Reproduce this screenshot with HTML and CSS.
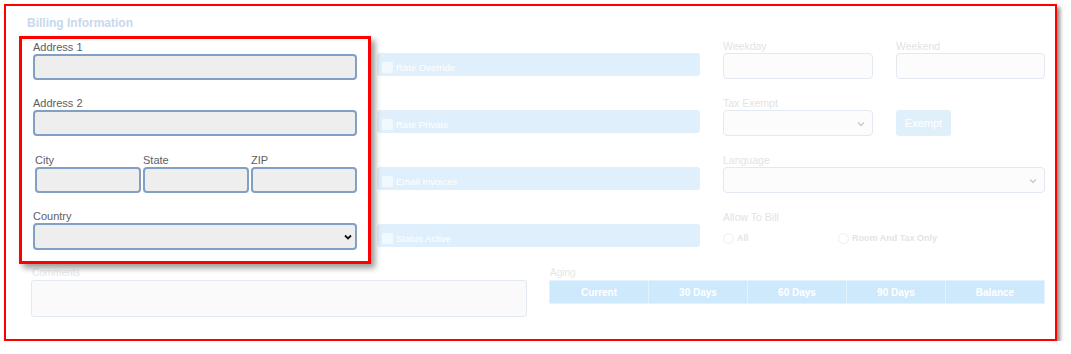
FILE: index.html
```html
<!DOCTYPE html>
<html>
<head>
    <title>Billing Information</title>
    <link rel="stylesheet" href="styles.css">
</head>
<body>
    <div class="panel">
        <h2 class="panel-title">Billing Information</h2>
        <div class="form-grid">
            <div class="address-box">
                <div class="field">
                    <label>Address 1</label>
                    <input type="text" class="addr-input">
                </div>
                <div class="field field-wide">
                    <label>Address 2</label>
                    <input type="text" class="addr-input">
                </div>
                <div class="field city-row">
                    <div>
                        <label>City</label>
                        <input type="text" class="addr-input">
                    </div>
                    <div>
                        <label>State</label>
                        <input type="text" class="addr-input">
                    </div>
                    <div>
                        <label>ZIP</label>
                        <input type="text" class="addr-input">
                    </div>
                </div>
                <div class="field">
                    <label>Country</label>
                    <div class="select-wrap">
                        <select class="addr-input addr-select"></select>
                        <svg class="chevron dark" width="8" height="6" viewBox="0 0 8 6"><path d="M1 1.5 L4 4.5 L7 1.5" fill="none" stroke="#111" stroke-width="1.8"/></svg>
                    </div>
                </div>
            </div>

            <div class="col-flags">
                <div class="flag-row"><div class="flag-bar"><span class="check"></span>Rate Override</div></div>
                <div class="flag-row"><div class="flag-bar"><span class="check"></span>Rate Private</div></div>
                <div class="flag-row"><div class="flag-bar"><span class="check"></span>Email Invoices</div></div>
                <div class="flag-row"><div class="flag-bar"><span class="check"></span>Status Active</div></div>
            </div>

            <div class="col-rates">
                <div class="rate-row">
                    <div class="rate-field w150">
                        <label>Weekday</label>
                        <input type="text" class="faded-input">
                    </div>
                    <div class="rate-field w149">
                        <label>Weekend</label>
                        <input type="text" class="faded-input">
                    </div>
                </div>
                <div class="rate-row">
                    <div class="rate-field w150">
                        <label>Tax Exempt</label>
                        <div class="select-wrap">
                            <select class="faded-input"></select>
                            <svg class="chevron" width="8" height="6" viewBox="0 0 8 6"><path d="M1 1.5 L4 4.5 L7 1.5" fill="none" stroke="#c8c8c8" stroke-width="1.3"/></svg>
                        </div>
                    </div>
                    <div class="rate-field">
                        <label>&nbsp;</label>
                        <button class="exempt-btn">Exempt</button>
                    </div>
                </div>
                <div class="rate-row">
                    <div class="rate-field full">
                        <label>Language</label>
                        <div class="select-wrap">
                            <select class="faded-input"></select>
                            <svg class="chevron" width="8" height="6" viewBox="0 0 8 6"><path d="M1 1.5 L4 4.5 L7 1.5" fill="none" stroke="#c8c8c8" stroke-width="1.3"/></svg>
                        </div>
                    </div>
                </div>
                <div class="rate-row">
                    <div class="rate-field full">
                        <label>Allow To Bill</label>
                        <div class="radio-line">
                            <span class="radio-opt opt-all"><span class="radio"></span>All</span>
                            <span class="radio-opt"><span class="radio"></span>Room And Tax Only</span>
                        </div>
                    </div>
                </div>
            </div>
        </div>

        <div class="bottom-row">
            <div class="comments">
                <label>Comments</label>
                <textarea></textarea>
            </div>
            <div class="aging">
                <label>Aging</label>
                <table class="aging-table">
                    <tr>
                        <th>Current</th>
                        <th>30 Days</th>
                        <th>60 Days</th>
                        <th>90 Days</th>
                        <th>Balance</th>
                    </tr>
                </table>
            </div>
        </div>
    </div>
</body>
</html>
```

FILE: styles.css
```css
body {
    font-family: "Liberation Sans", Arial, sans-serif;
    background-color: #fff;
    margin: 0;
    padding: 0;
}
.panel {
    box-sizing: border-box;
    width: 1053px;
    height: 337px;
    margin: 4px 0 0 4px;
    border: 2px solid #ff0000;
    box-shadow: 3px 3px 4px rgba(0, 0, 0, 0.45);
    padding: 7px 10px 0 13px;
    background-color: #fff;
}
.panel-title {
    margin: 0 0 3px 8px;
    font-size: 12px;
    line-height: 20px;
    font-weight: bold;
    color: #c8d8eb;
}
.form-grid {
    display: flex;
    align-items: flex-start;
}
.address-box {
    box-sizing: border-box;
    width: 352px;
    border: 3px solid #ff0000;
    box-shadow: 4px 4px 6px rgba(0, 0, 0, 0.4);
    padding: 1px 11px 11px 11px;
    background-color: #fff;
    position: relative;
    z-index: 1;
}
.address-box label {
    display: block;
    font-size: 11px;
    line-height: 14px;
    color: #5e5e5e;
}
.field {
    margin-bottom: 16px;
}
.field-wide {
    margin-bottom: 17px;
}
.field:last-child {
    margin-bottom: 0;
}
.addr-input {
    display: block;
    box-sizing: border-box;
    width: 100%;
    height: 26px;
    margin: 0;
    background-color: #eeeeee;
    border: 2px solid #829fc4;
    border-radius: 4px;
    font-family: inherit;
}
.addr-select {
    height: 27px;
    appearance: none;
    -webkit-appearance: none;
}
.city-row {
    display: grid;
    grid-template-columns: 1fr 1fr 1fr;
    column-gap: 2px;
    margin-left: 2px;
}
.select-wrap {
    position: relative;
}
.chevron {
    position: absolute;
    right: 8px;
    top: 11px;
}
.chevron.dark {
    right: 5px;
}
.col-flags {
    width: 323px;
    margin-left: 6px;
}
.flag-row {
    height: 43px;
    padding-top: 17px;
    box-sizing: border-box;
    margin-bottom: 14px;
}
.flag-bar {
    box-sizing: border-box;
    height: 23px;
    background-color: #dfeffb;
    border-radius: 3px;
    display: flex;
    align-items: center;
    padding: 6px 0 0 5px;
    font-size: 9.5px;
    color: #fff;
}
.check {
    width: 11px;
    height: 11px;
    background-color: #f1f8fe;
    border-radius: 1px;
    margin-right: 3px;
}
.col-rates {
    width: 322px;
    margin-left: 23px;
}
.rate-row {
    display: flex;
    height: 43px;
    margin-bottom: 14px;
}
.rate-field label {
    display: block;
    height: 17px;
    box-sizing: border-box;
    padding-top: 3px;
    font-size: 10.5px;
    line-height: 14px;
    color: #e3e3e3;
}
.rate-field.w150 {
    width: 150px;
    margin-right: 23px;
}
.rate-field.w149 {
    width: 149px;
}
.rate-field.full {
    width: 322px;
}
.faded-input {
    display: block;
    box-sizing: border-box;
    width: 100%;
    height: 26px;
    margin: 0;
    background-color: #fcfcfc;
    border: 1px solid #e2e9f2;
    border-radius: 4px;
    appearance: none;
    -webkit-appearance: none;
}
.exempt-btn {
    width: 55px;
    height: 26px;
    border: none;
    border-radius: 3px;
    background-color: #e0f0fb;
    color: #fff;
    font-family: inherit;
    font-size: 11px;
    padding: 0;
}
.radio-line {
    display: flex;
    align-items: center;
    height: 26px;
    padding-top: 2px;
    box-sizing: border-box;
    font-size: 9px;
    font-weight: bold;
    color: #e4e4e4;
}
.radio-opt {
    display: flex;
    align-items: center;
}
.opt-all {
    width: 115px;
}
.radio {
    width: 9px;
    height: 9px;
    border: 1px solid #eeeeee;
    border-radius: 50%;
    margin-right: 3px;
}
.bottom-row {
    display: flex;
    margin: 2px 0 0 12px;
}
.bottom-row label {
    display: block;
    font-size: 10px;
    line-height: 14px;
    color: #e6e6e6;
}
.comments {
    width: 496px;
}
.comments label {
    padding-left: 1px;
}
.comments textarea {
    display: block;
    box-sizing: border-box;
    width: 496px;
    height: 37px;
    margin: 0;
    background-color: #fafafa;
    border: 1px solid #e3e9f1;
    border-radius: 3px;
    resize: none;
}
.aging {
    width: 496px;
    margin-left: 22px;
}
.aging label {
    padding-left: 1px;
}
.aging-table {
    width: 496px;
    border-collapse: collapse;
    table-layout: fixed;
}
.aging-table th {
    height: 22px;
    padding: 0;
    background-color: #cfe9fc;
    border: 1px solid #e4f2fd;
    color: #fff;
    font-size: 10px;
    font-weight: bold;
    text-align: center;
}
```
